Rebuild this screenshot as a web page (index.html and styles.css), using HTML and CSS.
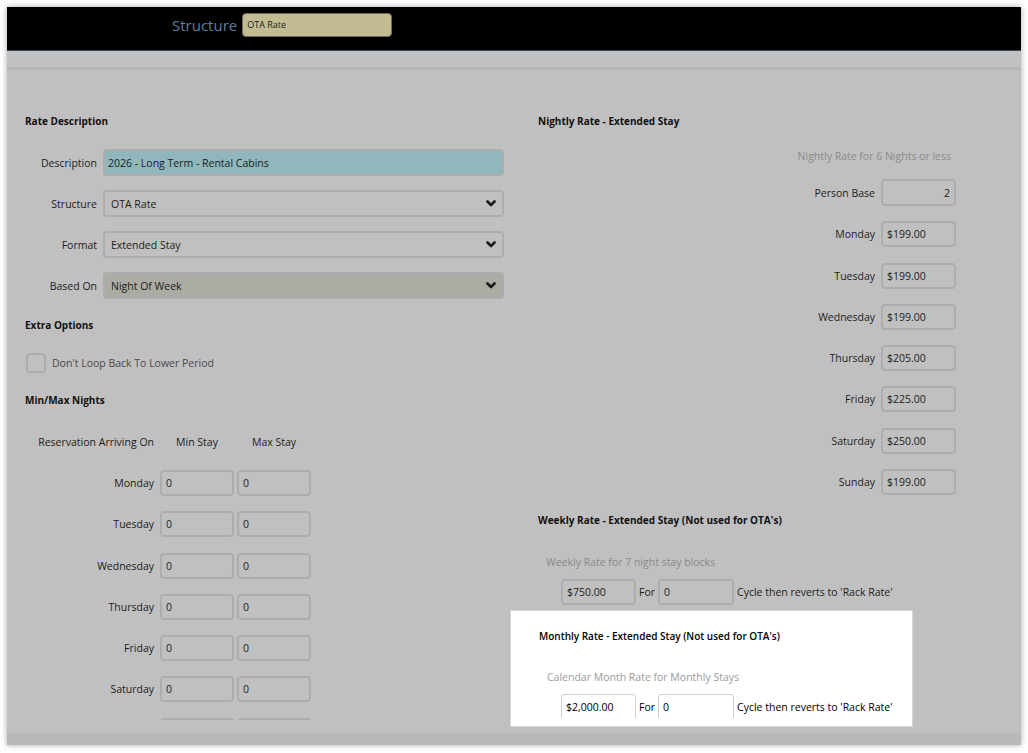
FILE: index.html
```html
<!DOCTYPE html>
<html lang="en">
<head>
  <meta charset="UTF-8">
  <meta name="viewport" content="width=device-width, initial-scale=1.0">
  <title>Rate Setup</title>
  <link rel="stylesheet" href="styles.css">
</head>
<body>
  <div class="frame">
    <header class="topbar">
      <span class="topbar-label">Structure</span>
      <div class="topbar-input">OTA Rate</div>
    </header>
    <div class="toolbar"></div>

    <main class="content">
      <section class="col col-left">
        <h2 class="section-title">Rate Description</h2>

        <div class="desc-rows">
          <div class="field-row">
            <label>Description</label>
            <input class="field field-desc" type="text" value="2026 - Long Term - Rental Cabins">
          </div>
          <div class="field-row">
            <label>Structure</label>
            <div class="field select">
              <span>OTA Rate</span>
              <svg class="chev" viewBox="0 0 10 7" width="10" height="7"><path d="M1.5 1.5 L5 5 L8.5 1.5" /></svg>
            </div>
          </div>
          <div class="field-row">
            <label>Format</label>
            <div class="field select">
              <span>Extended Stay</span>
              <svg class="chev" viewBox="0 0 10 7" width="10" height="7"><path d="M1.5 1.5 L5 5 L8.5 1.5" /></svg>
            </div>
          </div>
          <div class="field-row">
            <label>Based On</label>
            <div class="field select select-locked">
              <span>Night Of Week</span>
              <svg class="chev" viewBox="0 0 10 7" width="10" height="7"><path d="M1.5 1.5 L5 5 L8.5 1.5" /></svg>
            </div>
          </div>
        </div>

        <h2 class="section-title extra-title">Extra Options</h2>
        <div class="check-row">
          <span class="checkbox"></span>
          <span class="check-label">Don't Loop Back To Lower Period</span>
        </div>

        <h2 class="section-title minmax-title">Min/Max Nights</h2>
        <div class="stay-head">
          <span class="stay-label">Reservation Arriving On</span>
          <span>Min Stay</span>
          <span>Max Stay</span>
        </div>
        <div class="stay-rows">
          <div class="stay-row"><span class="stay-label">Monday</span><input class="field" value="0"><input class="field" value="0"></div>
          <div class="stay-row"><span class="stay-label">Tuesday</span><input class="field" value="0"><input class="field" value="0"></div>
          <div class="stay-row"><span class="stay-label">Wednesday</span><input class="field" value="0"><input class="field" value="0"></div>
          <div class="stay-row"><span class="stay-label">Thursday</span><input class="field" value="0"><input class="field" value="0"></div>
          <div class="stay-row"><span class="stay-label">Friday</span><input class="field" value="0"><input class="field" value="0"></div>
          <div class="stay-row"><span class="stay-label">Saturday</span><input class="field" value="0"><input class="field" value="0"></div>
          <div class="stay-row"><span class="stay-label"></span><input class="field" value=""><input class="field" value=""></div>
        </div>
      </section>

      <section class="col col-right">
        <h2 class="section-title">Nightly Rate - Extended Stay</h2>
        <div class="hint hint-right">Nightly Rate for 6 Nights or less</div>
        <div class="rate-rows">
          <div class="rate-row"><label>Person Base</label><input class="field field-num" value="2"></div>
          <div class="rate-row"><label>Monday</label><input class="field" value="$199.00"></div>
          <div class="rate-row"><label>Tuesday</label><input class="field" value="$199.00"></div>
          <div class="rate-row"><label>Wednesday</label><input class="field" value="$199.00"></div>
          <div class="rate-row"><label>Thursday</label><input class="field" value="$205.00"></div>
          <div class="rate-row"><label>Friday</label><input class="field" value="$225.00"></div>
          <div class="rate-row"><label>Saturday</label><input class="field" value="$250.00"></div>
          <div class="rate-row"><label>Sunday</label><input class="field" value="$199.00"></div>
        </div>

        <h2 class="section-title weekly-title">Weekly Rate - Extended Stay (Not used for OTA's)</h2>
        <div class="hint hint-left">Weekly Rate for 7 night stay blocks</div>
        <div class="cycle-row">
          <input class="field cycle-amount" value="$750.00">
          <span class="cycle-for">For</span>
          <input class="field cycle-count" value="0">
          <span class="cycle-text">Cycle then reverts to 'Rack Rate'</span>
        </div>
      </section>
    </main>

    <div class="bottom-pad"></div>
    <footer class="footer"></footer>

    <!-- highlighted step of the setup tour -->
    <div class="spotlight">
      <div class="spotlight-clip">
        <h2 class="section-title">Monthly Rate - Extended Stay (Not used for OTA's)</h2>
        <div class="hint hint-left">Calendar Month Rate for Monthly Stays</div>
        <div class="cycle-row">
          <input class="field cycle-amount" value="$2,000.00">
          <span class="cycle-for">For</span>
          <input class="field cycle-count" value="0">
          <span class="cycle-text">Cycle then reverts to 'Rack Rate'</span>
        </div>
      </div>
    </div>
  </div>
</body>
</html>
```

FILE: styles.css
```css
* {
  box-sizing: border-box;
}

body {
  margin: 0;
  padding: 7px;
  background-color: #fff;
  font-family: 'Open Sans', 'Liberation Sans', sans-serif;
  font-size: 10.5px;
  color: #1c1c1c;
}

.frame {
  position: relative;
  width: 1014px;
  height: 738px;
  display: flex;
  flex-direction: column;
  background-color: #c0c0c0;
  box-shadow: 0 0 6px rgba(0, 0, 0, 0.35);
}

/* Top bar */
.topbar {
  height: 44px;
  flex-shrink: 0;
  display: flex;
  align-items: flex-start;
  gap: 5px;
  padding: 6px 0 0 165px;
  background-color: #000;
  border-bottom: 1px solid #34495a;
}

.topbar-label {
  font-size: 15px;
  line-height: 24px;
  color: #5f7f9f;
}

.topbar-input {
  width: 150px;
  height: 24px;
  padding-left: 4px;
  background-color: #c3bc93;
  border: 1px solid #6f6b58;
  border-radius: 4px;
  font-size: 9px;
  line-height: 22px;
  color: #222;
}

.toolbar {
  height: 19px;
  flex-shrink: 0;
  background-color: #c1c1c1;
  border-bottom: 3px solid #b5b5b5;
}

/* Content */
.content {
  height: 650px;
  flex-shrink: 0;
  overflow: hidden;
  display: grid;
  grid-template-columns: 513px 418px;
  align-items: start;
  padding: 44px 0 0 18px;
}

.col {
  display: flex;
  flex-direction: column;
}

.section-title {
  margin: 0;
  font-size: 10px;
  font-weight: 700;
  line-height: 14px;
  color: #111;
}

.field {
  height: 26px;
  padding: 0 4px;
  background-color: #c0c0c0;
  border: 2px solid #adadad;
  border-radius: 4px;
  font-family: inherit;
  font-size: 10.5px;
  color: #1c1c1c;
  outline: none;
}

/* Rate description */
.desc-rows {
  display: flex;
  flex-direction: column;
  gap: 14px;
  margin-top: 21px;
}

.field-row {
  display: flex;
  align-items: center;
  gap: 6px;
  height: 27px;
}

.field-row label {
  width: 72px;
  text-align: right;
}

.field-row .field {
  width: 401px;
  height: 27px;
}

.field-desc {
  padding: 0 3px;
  background-color: #8fb7bc;
}

.select {
  display: flex;
  align-items: center;
  justify-content: space-between;
  padding: 0 6px 0 6px;
}

.select-locked {
  background-color: #acaca4;
}

.chev {
  fill: none;
  stroke: #1c1c1c;
  stroke-width: 2.6;
  stroke-linecap: round;
  stroke-linejoin: round;
}

/* Extra options */
.extra-title {
  margin-top: 19px;
}

.check-row {
  display: flex;
  align-items: center;
  gap: 6px;
  margin-top: 21px;
  padding-left: 1px;
}

.checkbox {
  width: 20px;
  height: 20px;
  border: 2px solid #adadad;
  border-radius: 4px;
}

.check-label {
  color: #4a4a4a;
}

/* Min / max nights */
.minmax-title {
  margin-top: 20px;
}

.stay-head,
.stay-row {
  display: grid;
  grid-template-columns: 132px 74px 74px;
  column-gap: 3px;
  align-items: center;
}

.stay-head {
  margin-top: 28px;
  line-height: 14px;
  text-align: center;
}

.stay-label {
  padding-right: 3px;
  text-align: right;
}

.stay-rows {
  display: flex;
  flex-direction: column;
  gap: 15.3px;
  margin-top: 21px;
}

.stay-row .field {
  width: 74px;
}

/* Right column */
.hint {
  line-height: 14px;
  font-size: 10.5px;
  color: #8a8a8a;
}

.hint-right {
  margin-top: 21px;
  padding-right: 5px;
  text-align: right;
}

.hint-left {
  padding-left: 8px;
}

.rate-rows {
  display: flex;
  flex-direction: column;
  gap: 15.3px;
  margin-top: 16px;
}

.rate-row {
  display: flex;
  justify-content: flex-end;
  align-items: center;
  gap: 6px;
}

.rate-row .field {
  width: 75px;
}

.rate-row .field-num {
  height: 27px;
  text-align: right;
}

.weekly-title {
  margin-top: 18px;
}

.weekly-title + .hint {
  margin-top: 28px;
}

.cycle-row {
  display: flex;
  align-items: center;
  margin-top: 10px;
  padding-left: 23px;
}

.cycle-amount {
  width: 75px;
}

.cycle-for {
  margin: 0 3px;
}

.cycle-count {
  width: 76px;
}

.cycle-text {
  margin-left: 3px;
}

.bottom-pad {
  height: 13px;
  flex-shrink: 0;
}

.footer {
  height: 12px;
  flex-shrink: 0;
  background-color: #b9b9b9;
}

/* Tour spotlight */
.spotlight {
  position: absolute;
  left: 503px;
  top: 603px;
  width: 403px;
  height: 117px;
  background-color: #fff;
  border: 1px solid #d6d6d6;
}

.spotlight-clip {
  height: 107px;
  overflow: hidden;
  padding: 18px 0 0 28px;
}

.spotlight .section-title {
  font-weight: 600;
  color: #000;
}

.spotlight .hint {
  margin-top: 27px;
  color: #9a9a9a;
}

.spotlight .cycle-row {
  padding-left: 22px;
}

.spotlight .field {
  background-color: #fff;
  border: 1px solid #cfcfcf;
  border-radius: 3px;
  color: #000;
}

.spotlight .cycle-text,
.spotlight .cycle-for {
  color: #000;
}
```
